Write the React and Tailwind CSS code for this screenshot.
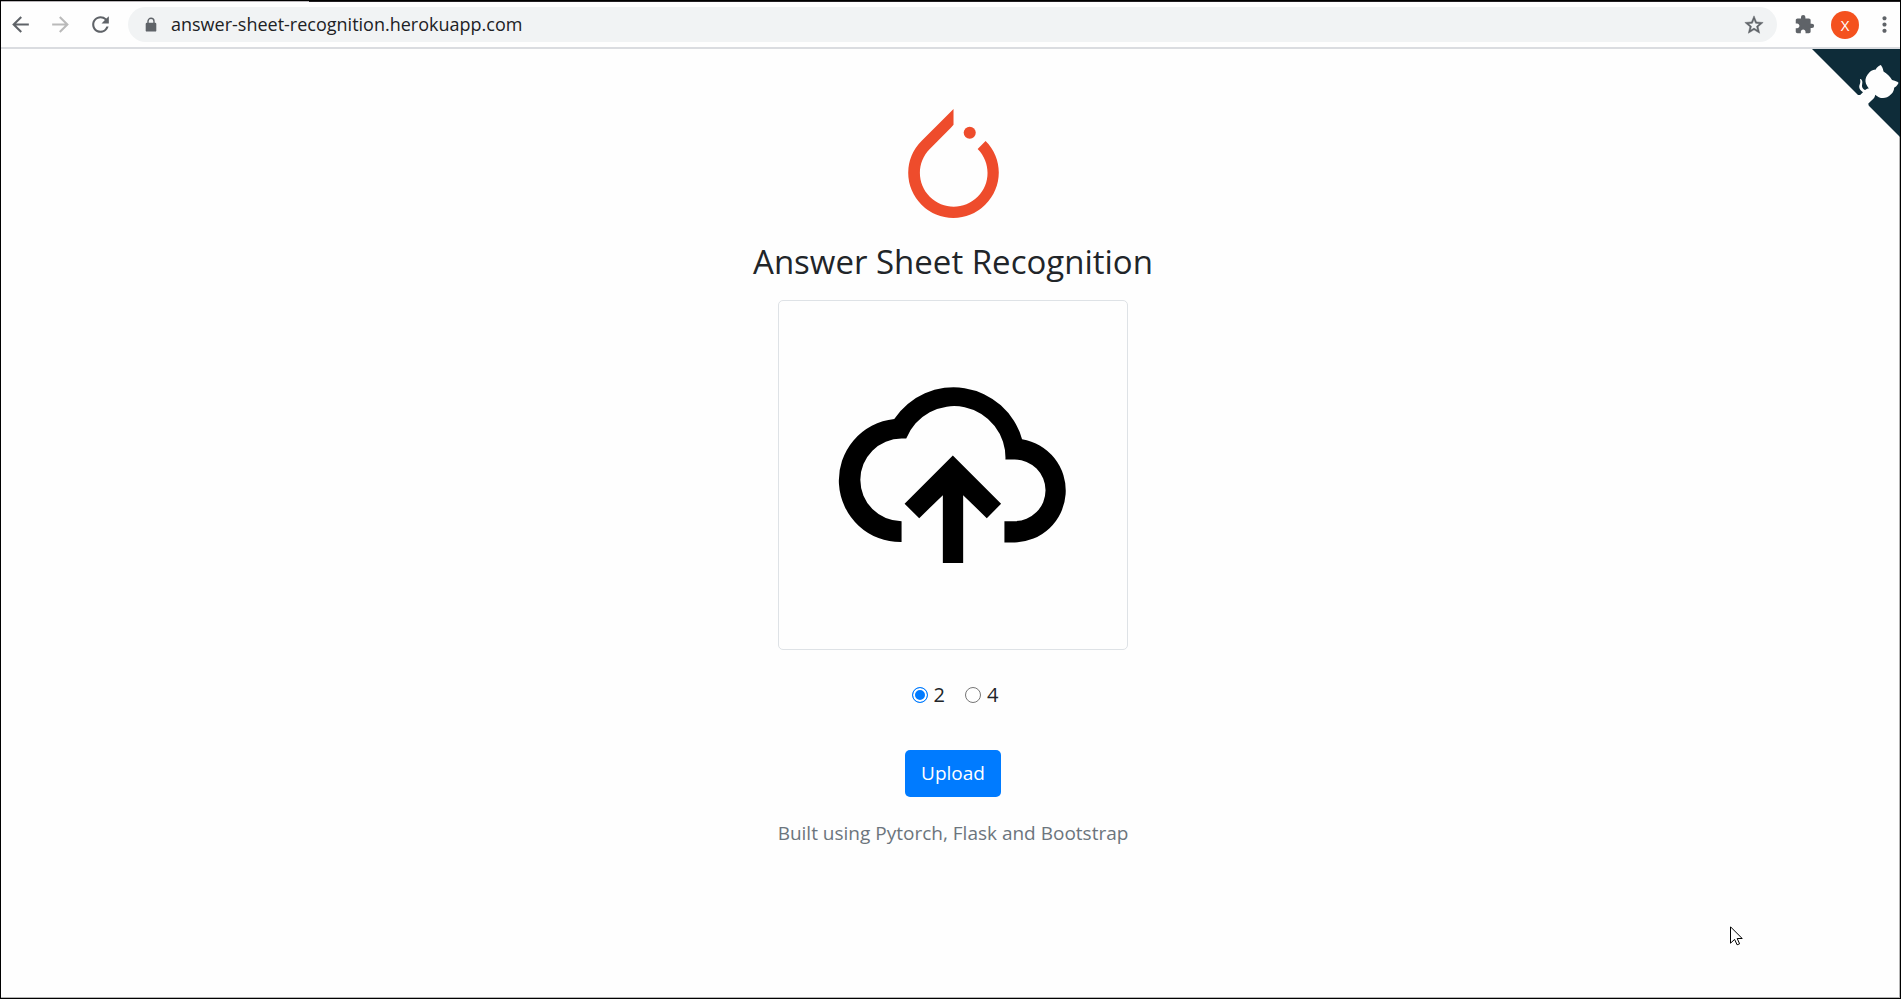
import { useState } from "react";
import {
  MdArrowBack,
  MdArrowForward,
  MdRefresh,
  MdStarOutline,
  MdExtension,
  MdMoreVert,
} from "react-icons/md";

function PadlockIcon() {
  return (
    <svg viewBox="0 0 16 16" className="size-4 shrink-0" aria-hidden="true">
      <rect x="2.7" y="5.8" width="10.6" height="8.8" rx="1.2" fill="currentColor" />
      <path d="M5 6.5V4.3a3 3 0 0 1 6 0V6.5" fill="none" stroke="currentColor" strokeWidth="1.4" />
    </svg>
  );
}

function BrowserBar() {
  return (
    <header className="border-b-2 border-[#dadce0] bg-[#fefefe]">
      <div className="flex h-px">
        <div className="w-[308px] bg-[#b9b5b9]" />
        <div className="grow bg-[#231f23]" />
      </div>
      <div className="flex h-[45px] items-center pl-[7px] pr-[3px] text-[#5f6368]">
        <div className="flex items-center gap-[15px]">
          <button type="button" aria-label="Back" className="block">
            <MdArrowBack size={25} />
          </button>
          <button type="button" aria-label="Forward" className="block text-[#bababa]">
            <MdArrowForward size={25} />
          </button>
          <button type="button" aria-label="Reload" className="block">
            <MdRefresh size={25} />
          </button>
        </div>
        <div className="ml-[15px] flex h-[35px] grow items-center gap-3 rounded-full bg-[#f1f3f4] pl-[15px] pr-3">
          <PadlockIcon />
          <input
            type="text"
            aria-label="Address"
            defaultValue="answer-sheet-recognition.herokuapp.com"
            className="min-w-0 grow bg-transparent text-[18px] text-[#202124] outline-none"
          />
          <button type="button" aria-label="Bookmark this page" className="block">
            <MdStarOutline size={22} className="stroke-current stroke-[0.5]" />
          </button>
        </div>
        <button type="button" aria-label="Extensions" className="ml-[17px] block">
          <MdExtension size={21} />
        </button>
        <button
          type="button"
          aria-label="Profile"
          className="ml-4 size-7 rounded-full bg-[#f4511e] text-[15px] leading-7 text-white"
        >
          X
        </button>
        <button type="button" aria-label="Menu" className="ml-[13px] block">
          <MdMoreVert size={25} />
        </button>
      </div>
    </header>
  );
}

function GithubCorner() {
  return (
    <a href="#github" aria-label="View source on GitHub" className="absolute top-0 -right-px">
      <svg viewBox="0 0 220 250" className="h-[100px] w-[88px] fill-[#0e2c39]">
        <path d="M0,0 L115,115 L130,115 L142,142 L250,250 L250,0 Z" />
        <path
          fill="#fefefe"
          d="M128.3,109.0 C113.8,99.7 119.0,89.6 119.0,89.6 C122.0,82.7 120.5,78.6 120.5,78.6 C119.2,72.0 123.4,76.3 123.4,76.3 C127.3,80.9 125.5,87.3 125.5,87.3 C122.9,97.6 130.6,101.9 134.4,103.2"
        />
        <path
          fill="#fefefe"
          d="M115.0,115.0 C114.9,115.1 118.7,116.5 119.8,115.4 L133.7,101.6 C136.9,99.2 139.9,98.4 142.2,98.6 C133.8,88.0 127.5,74.4 143.8,58.0 C148.5,53.4 154.0,51.2 159.7,51.0 C160.3,49.4 163.2,43.6 171.4,40.1 C171.4,40.1 176.1,42.5 178.8,56.2 C183.1,58.6 187.2,61.8 190.9,65.4 C194.5,69.0 197.7,73.2 200.1,77.6 C213.8,80.2 216.3,84.9 216.3,84.9 C212.7,93.1 206.9,96.0 205.4,96.6 C205.1,102.4 203.0,107.8 198.3,112.5 C181.9,128.9 168.3,122.5 157.7,114.1 C157.9,116.9 156.7,120.9 152.7,124.9 L141.0,136.5 C139.8,137.7 141.6,141.9 141.8,141.8 Z"
        />
      </svg>
    </a>
  );
}

function PytorchLogo() {
  return (
    <svg viewBox="0 0 24 24" className="size-[109px] fill-[#ee4c2c]" aria-hidden="true">
      <path d="M12.005 0L4.952 7.053a9.865 9.865 0 000 14.022 9.866 9.866 0 0014.022 0c3.984-3.9 3.986-10.205.085-14.023l-1.744 1.743c2.904 2.905 2.904 7.634 0 10.538s-7.634 2.904-10.538 0-2.904-7.634 0-10.538l4.647-4.646.582-.665z" />
      <circle cx="15.573" cy="5.226" r="1.327" />
    </svg>
  );
}

function CloudUpload() {
  return (
    <svg viewBox="238 290 682 530" className="w-[227px] overflow-visible" aria-hidden="true">
      <path d="M423 756A185.5 185.5 0 0 1 401 386A214 214 0 0 1 785 447A156 156 0 0 1 763 757H732V693H763A92.5 92.5 0 0 0 763 508H735A154.5 154.5 0 0 0 437 445H423A124 124 0 0 0 423 693Z" />
      <path d="M577 496L722 641L679 684L608 615V819H547V615L476 684L432 641Z" />
    </svg>
  );
}

function Choice({ value, checked, onChange }) {
  return (
    <label className="flex items-center gap-[6px] text-xl leading-[30px]">
      <input
        type="radio"
        name="columns"
        value={value}
        checked={checked}
        onChange={onChange}
        className="size-4 appearance-none rounded-full border border-[#767676] bg-white checked:border-[#007bff] checked:bg-[#007bff] checked:shadow-[inset_0_0_0_2px_#fff]"
      />
      {value}
    </label>
  );
}

export default function App() {
  const [columns, setColumns] = useState("2");
  return (
    <div className="flex min-h-screen flex-col border border-black bg-[#fefefe] font-['Open_Sans',sans-serif] text-[#212529]">
      <BrowserBar />
      <main className="relative flex grow flex-col items-center border-r border-b border-[#b4b4b4] pt-[60px] pl-[6px]">
        <GithubCorner />
        <PytorchLogo />
        <h1 className="mt-6 text-[33px] leading-10">Answer Sheet Recognition</h1>
        <div className="mt-[18px] flex size-[350px] items-center justify-center rounded-[5px] border border-[#dee2e6]">
          <CloudUpload />
        </div>
        <div className="mt-[30px] flex gap-5 pl-1">
          {["2", "4"].map((value) => (
            <Choice
              key={value}
              value={value}
              checked={columns === value}
              onChange={() => setColumns(value)}
            />
          ))}
        </div>
        <button
          type="button"
          className="mt-10 h-[47px] rounded-[5px] bg-[#007bff] px-4 text-[19px] text-white"
        >
          Upload
        </button>
        <p className="mt-[21px] text-[19px] leading-[30px] text-[#6c757d]">
          Built using Pytorch, Flask and Bootstrap
        </p>
        <svg
          viewBox="0 0 13 20"
          className="absolute right-[156px] bottom-[51px] h-5 w-[13px] fill-white stroke-black"
          aria-hidden="true"
        >
          <path d="M.5 .8V17.2L4.6 13.4L7.1 18.8L9.6 17.8L7.2 12.5H12.2Z" />
        </svg>
      </main>
    </div>
  );
}
